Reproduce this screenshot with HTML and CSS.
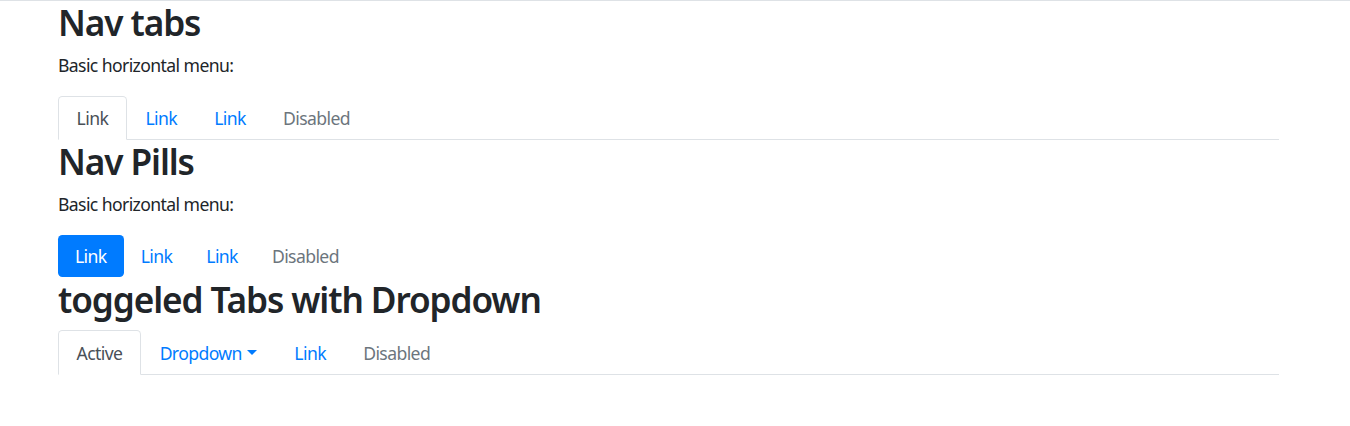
FILE: index.html
```html
<!DOCTYPE html>
<html lang="en">
<head>
<meta charset="utf-8">
<title>Nav</title>
<link rel="stylesheet" href="styles.css">
</head>
<body>
<div class="container">
  <h2 class="title">Nav tabs</h2>
  <p class="lead-text">Basic horizontal menu:</p>
  <ul class="nav nav-tabs">
    <li class="nav-item"><a class="nav-link active" href="#">Link</a></li>
    <li class="nav-item"><a class="nav-link" href="#">Link</a></li>
    <li class="nav-item"><a class="nav-link" href="#">Link</a></li>
    <li class="nav-item"><a class="nav-link disabled" href="#">Disabled</a></li>
  </ul>

  <h2 class="title">Nav Pills</h2>
  <p class="lead-text">Basic horizontal menu:</p>
  <ul class="nav nav-pills">
    <li class="nav-item"><a class="nav-link active" href="#">Link</a></li>
    <li class="nav-item"><a class="nav-link" href="#">Link</a></li>
    <li class="nav-item"><a class="nav-link" href="#">Link</a></li>
    <li class="nav-item"><a class="nav-link disabled" href="#">Disabled</a></li>
  </ul>

  <h2 class="title title-gap">toggeled Tabs with Dropdown</h2>
  <ul class="nav nav-tabs nav-tabs-tall">
    <li class="nav-item"><a class="nav-link active" href="#">Active</a></li>
    <li class="nav-item"><a class="nav-link dropdown-toggle" href="#">Dropdown</a></li>
    <li class="nav-item"><a class="nav-link" href="#">Link</a></li>
    <li class="nav-item"><a class="nav-link disabled" href="#">Disabled</a></li>
  </ul>
</div>
</body>
</html>
```

FILE: styles.css
```css
html, body {
  margin: 0;
  padding: 0;
  background: #fff;
}

body {
  border-top: 1px solid #dee2e6;
  font-family: "Noto Sans", "Open Sans", Arial, sans-serif;
  font-size: 17.6px;
  line-height: 26.4px;
  letter-spacing: -0.6px;
  color: #212529;
}

.container {
  width: 1221px;
  margin-left: 58px;
}

.title {
  margin: 0 0 8.8px;
  font-size: 35.2px;
  line-height: 42.24px;
  font-weight: 600;
  letter-spacing: -1.1px;
  color: #212529;
}

.title-gap {
  padding-top: 1px;
  margin-bottom: 9.8px;
}

.lead-text {
  margin: 0 0 17.6px;
}

.nav {
  display: flex;
  flex-wrap: wrap;
  list-style: none;
  margin: 0;
  padding: 0;
}

.nav-link {
  display: block;
  padding: 8px 17.6px;
  line-height: 26px;
  color: #007bff;
  text-decoration: none;
}

.nav-link.disabled {
  color: #6c757d;
}

.nav-tabs {
  border-bottom: 1px solid #dee2e6;
}

.nav-tabs .nav-item {
  margin-bottom: -1px;
}

.nav-tabs .nav-link {
  border: 1px solid transparent;
  border-top-left-radius: 4.4px;
  border-top-right-radius: 4.4px;
}

.nav-tabs-tall .nav-link {
  padding-top: 8.5px;
  padding-bottom: 8.5px;
}

.nav-tabs .nav-link.active {
  color: #495057;
  background: #fff;
  border-color: #dee2e6 #dee2e6 #fff;
}

.nav-pills {
  margin-top: 1.5px;
}

.nav-pills .nav-link {
  border-radius: 4.4px;
  padding-left: 17px;
  padding-right: 17px;
}

.nav-pills .nav-link.active {
  color: #fff;
  background: #007bff;
}

.dropdown-toggle::after {
  content: "";
  display: inline-block;
  margin-left: 0.3em;
  vertical-align: 0.255em;
  border-top: 0.3em solid;
  border-right: 0.3em solid transparent;
  border-left: 0.3em solid transparent;
  border-bottom: 0;
}
```
